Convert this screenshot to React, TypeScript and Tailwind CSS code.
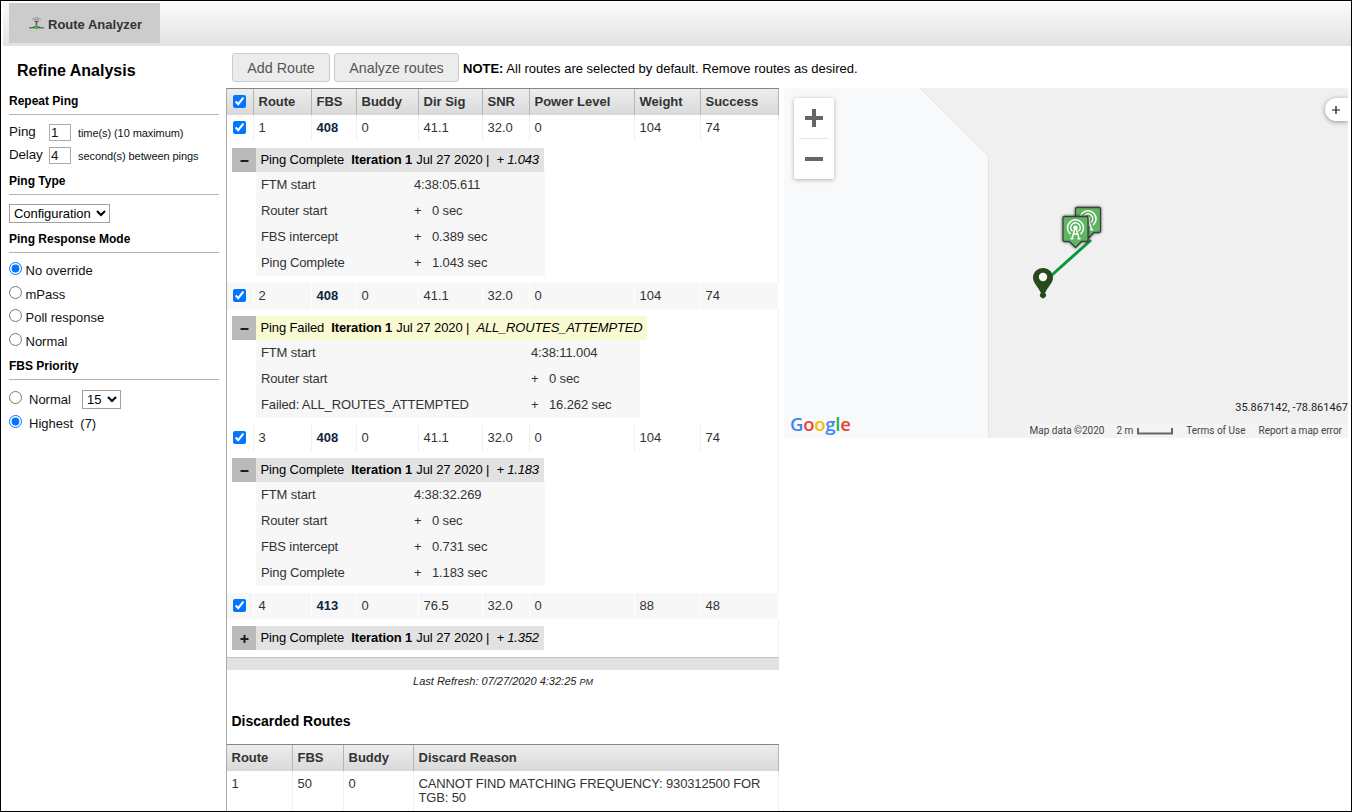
import type { ReactNode } from "react";

const COLS = "grid grid-cols-[27px_58px_45px_62px_64px_47px_105px_66px_78px]";
const DISCARD_COLS = "grid grid-cols-[66px_51px_70px_365px]";

type Step = { label: string; plus?: boolean; value: string };
type Ping = { failed?: boolean; open: boolean; result: string; steps: Step[] };
type RouteRow = { id: number; cells: string[]; ping: Ping };

const ROUTES: RouteRow[] = [
  {
    id: 1,
    cells: ["408", "0", "41.1", "32.0", "0", "104", "74"],
    ping: {
      open: true,
      result: "+ 1.043",
      steps: [
        { label: "FTM start", value: "4:38:05.611" },
        { label: "Router start", plus: true, value: "0 sec" },
        { label: "FBS intercept", plus: true, value: "0.389 sec" },
        { label: "Ping Complete", plus: true, value: "1.043 sec" },
      ],
    },
  },
  {
    id: 2,
    cells: ["408", "0", "41.1", "32.0", "0", "104", "74"],
    ping: {
      failed: true,
      open: true,
      result: "ALL_ROUTES_ATTEMPTED",
      steps: [
        { label: "FTM start", value: "4:38:11.004" },
        { label: "Router start", plus: true, value: "0 sec" },
        { label: "Failed: ALL_ROUTES_ATTEMPTED", plus: true, value: "16.262 sec" },
      ],
    },
  },
  {
    id: 3,
    cells: ["408", "0", "41.1", "32.0", "0", "104", "74"],
    ping: {
      open: true,
      result: "+ 1.183",
      steps: [
        { label: "FTM start", value: "4:38:32.269" },
        { label: "Router start", plus: true, value: "0 sec" },
        { label: "FBS intercept", plus: true, value: "0.731 sec" },
        { label: "Ping Complete", plus: true, value: "1.183 sec" },
      ],
    },
  },
  {
    id: 4,
    cells: ["413", "0", "76.5", "32.0", "0", "88", "48"],
    ping: { open: false, result: "+ 1.352", steps: [] },
  },
];

const HEADINGS = ["Route", "FBS", "Buddy", "Dir Sig", "SNR", "Power Level", "Weight", "Success"];

function TowerIcon() {
  return (
    <svg width="15" height="14" viewBox="0 0 15 14" fill="none">
      <path d="M3 3.600Q7.500-.6 12 3.600" stroke="#999" strokeWidth="1" />
      <path d="M5 4.300Q7.500 2 10 4.300" stroke="#777" strokeWidth="1" />
      <path d="M5.500 5.500h4" stroke="#555" strokeWidth="1" />
      <path d="M7.500 5v6" stroke="#555" strokeWidth="1.500" />
      <path d="M0 12Q4 11.600 5 10.800h5q1 .8 5 1.200z" fill="#3c4a3c" stroke="#4a554a" strokeWidth=".6" />
      <path d="M5.500 11.300L7.500 9.300l2 2-2 1.700z" fill="#22c02c" stroke="#22c02c" strokeWidth=".6" />
    </svg>
  );
}

function SectionTitle({ children, className }: { children: ReactNode; className: string }) {
  return (
    <h3 className={`border-b border-[#b3b3b3] text-[12px] leading-[14px] font-bold text-black ${className}`}>
      {children}
    </h3>
  );
}

function Radio({ name, label, checked, className = "", children }: {
  name: string; label: string; checked?: boolean; className?: string; children?: ReactNode;
}) {
  return (
    <label className={`flex items-start text-[13px] leading-[18px] text-[#111] ${className}`}>
      <input type="radio" name={name} defaultChecked={checked} className="size-[13px] shrink-0" />
      <span className={name === "mode" ? "ml-[3.500px]" : "ml-[7px] whitespace-pre"}>{label}</span>
      {children}
    </label>
  );
}

function Sidebar() {
  return (
    <aside className="flex w-[218px] shrink-0 flex-col pl-2">
      <h2 className="mt-4 ml-2 text-[16px] leading-[18px] font-bold text-black">Refine Analysis</h2>
      <SectionTitle className="mt-[14px] h-[21px]">Repeat Ping</SectionTitle>
      <div className="mt-[9px] flex h-[18px] text-[13px] leading-[16px] text-[#111]">
        <span className="w-10 pt-px text-[13.4px] leading-[14px]">Ping</span>
        <input defaultValue="1" className="h-[17px] w-[22px] border border-[#a9a9a9] px-px pb-px text-[13.4px] leading-[14px]" />
        <span className="ml-[7px] pt-px text-[11px] tracking-[-0.08px]">time(s) (10 maximum)</span>
      </div>
      <div className="mt-[5px] flex h-[18px] text-[13px] leading-[16px] text-[#111]">
        <span className="w-10 pt-px text-[13.4px] leading-[14px] tracking-[-0.15px]">Delay</span>
        <input defaultValue="4" className="h-[17px] w-[22px] border border-[#a9a9a9] px-px pb-px text-[13.4px] leading-[14px]" />
        <span className="ml-[7px] pt-px text-[11px] tracking-[-0.08px]">second(s) between pings</span>
      </div>
      <SectionTitle className="mt-[9px] h-[21px]">Ping Type</SectionTitle>
      <select className="mt-[9px] h-[19px] w-[101px] rounded-none border border-[#a0a0a0] bg-white text-[13px] tracking-[-0.05px] text-black">
        <option>Configuration</option>
      </select>
      <SectionTitle className="mt-[9px] h-[21px]">Ping Response Mode</SectionTitle>
      <div className="mt-[9px] flex flex-col">
        <Radio name="mode" label="No override" checked className="h-6" />
        <Radio name="mode" label="mPass" className="h-[23px]" />
        <Radio name="mode" label="Poll response" className="h-6" />
        <Radio name="mode" label="Normal" className="h-[18px]" />
      </div>
      <SectionTitle className="mt-[8px] h-[21px]">FBS Priority</SectionTitle>
      <div className="mt-[11px] flex flex-col">
        <Radio name="priority" label="Normal" className="h-6">
          <select className="-mt-px ml-[11px] h-[19px] w-[39px] rounded-none border border-[#a0a0a0] bg-white text-[13px] text-black">
            <option>15</option>
          </select>
        </Radio>
        <Radio name="priority" label="Highest  (7)" checked className="h-6" />
      </div>
    </aside>
  );
}

function PingBlock({ ping }: { ping: Ping }) {
  return (
    <div className="flex border-r border-[#f3f3f3] py-[7px] pl-[5px] text-[13px]">
      <div className="flex h-6 w-6 shrink-0 items-center justify-center bg-[#bababa]">
        <svg width="9" height="9" viewBox="0 0 9 9" className="mt-px">
          <path d={ping.open ? "M0.5 5h8" : "M0.5 5h8M4.5 1v8"} stroke="#1c1c1c" strokeWidth="2" />
        </svg>
      </div>
      <div>
        <div className={`flex h-6 pl-[4.5px] leading-6 whitespace-pre text-black ${ping.failed ? "w-[391px] bg-[#fafad2]" : "w-72 bg-[#e2e2e2]"}`}>
          <span className="tracking-[-0.12px]">{ping.failed ? "Ping Failed" : "Ping Complete"}</span>
          <span className="ml-[7px] font-bold tracking-[-0.1px]">Iteration 1</span>
          <span className="ml-1 tracking-[-0.08px]">Jul 27 2020 |</span>
          <span className={`italic ${ping.failed ? "ml-[7px] tracking-[-0.18px]" : "ml-[7px] tracking-[-0.2px]"}`}>{ping.result}</span>
        </div>
        {ping.steps.map((s) => (
          <div key={s.label} className={`flex h-[26px] bg-[#f7f7f7] pl-[5px] leading-[26px] text-[#333] ${ping.failed ? "w-[384px]" : "w-[289px]"}`}>
            <span className={`shrink-0 ${ping.failed ? "w-[270px]" : "w-[153px]"} tracking-[-0.13px]`}>{s.label}</span>
            {s.plus && <span className="w-[18px] shrink-0">+</span>}
            <span className="tracking-[-0.12px]">{s.value}</span>
          </div>
        ))}
      </div>
    </div>
  );
}

function Cell({ children, bold }: { children: ReactNode; bold?: boolean }) {
  return (
    <div className={`border-r border-[#efefef] pl-[4.500px] leading-[25px] ${bold ? "font-bold text-[#0f2540]" : "text-[#333]"}`}>
      {children}
    </div>
  );
}

const HEAD = "h-[27px] border-t border-[#858585] bg-linear-to-b from-[#ededed] to-[#d9d9d9] text-[13px] font-bold text-[#333]";
const HEAD_CELL = "border-r border-[#b5b5b5] pl-[4.500px] leading-[25px]";
const BUTTON = "h-[29px] shrink-0 rounded-[3px] border border-[#ccc] bg-[#ececec] text-[14.3px] leading-[26px] whitespace-nowrap text-[#555]";

function Routes() {
  return (
    <main className="w-[553px] shrink-0">
      <div className="flex h-[42px] pt-[7px] pl-[6px]">
        <button className={`w-[98px] ${BUTTON}`}>Add Route</button>
        <button className={`ml-1 w-[125px] ${BUTTON}`}>Analyze routes</button>
        <p className="ml-1 text-[13px] leading-[31px] whitespace-nowrap text-black">
          <b>NOTE:</b> All routes are selected by default. Remove routes as desired.
        </p>
      </div>
      <div className="h-[723px] border-l border-[#aaa]">
        <div className="text-[13px]">
          <div className={`${COLS} ${HEAD}`}>
            <div className={HEAD_CELL}>
              <input type="checkbox" defaultChecked className="ml-[1.500px] block size-[13px] translate-y-[6px]" />
            </div>
            {HEADINGS.map((h) => (
              <div key={h} className={HEAD_CELL}>{h}</div>
            ))}
          </div>
          {ROUTES.map((r) => (
            <div key={r.id}>
              <div className={`${COLS} h-[26px] ${r.id % 2 === 0 ? "bg-[#f7f7f7] [&>div]:border-white" : ""}`}>
                <Cell>
                  <input type="checkbox" defaultChecked className="ml-[1.500px] block size-[13px] translate-y-[6px]" />
                </Cell>
                <Cell>{r.id}</Cell>
                {r.cells.map((c, i) => (
                  <Cell key={i} bold={i === 0}>{c}</Cell>
                ))}
              </div>
              <PingBlock ping={r.ping} />
            </div>
          ))}
          <div className="h-[13px] border-t border-[#c3c3c3] bg-[#e2e2e2]" />
        </div>
        <p className="mt-1 text-center text-[11px] leading-[14px] text-[#222] italic">
          Last Refresh: 07/27/2020 4:32:25 <span className="text-[9px]">PM</span>
        </p>
        <h3 className="mt-6 pl-[4.500px] text-[14px] leading-4 font-bold text-black">Discarded Routes</h3>
        <div className={`mt-[15px] ${DISCARD_COLS} ${HEAD}`}>
          {["Route", "FBS", "Buddy", "Discard Reason"].map((h) => (
            <div key={h} className={HEAD_CELL}>{h}</div>
          ))}
        </div>
        <div className={`${DISCARD_COLS} h-10 text-[13px] text-[#333]`}>
          {["1", "50", "0"].map((c, i) => (
            <div key={i} className="border-r border-[#efefef] pt-[6px] pl-[4.500px] leading-[14px]">{c}</div>
          ))}
          <div className="border-r border-[#efefef] pt-[6px] pl-[4.500px] leading-[14px] tracking-[-0.15px]">
            CANNOT FIND MATCHING FREQUENCY: 930312500 FOR
            <br />
            TGB: 50
          </div>
        </div>
      </div>
    </main>
  );
}

function TowerGlyph({ x, y }: { x: number; y: number }) {
  return (
    <g transform={`translate(${x} ${y})`}>
      <path
        d="M2 .5h22q1.500 0 1.500 1.500v22q0 1.500-1.500 1.500h-5l-6 6-6-6H2Q.5 25.500.5 24V2Q.5.5 2 .5z"
        fill="#5fb662" stroke="#3e3e3e" strokeWidth="1.300" filter="url(#glow)"
      />
      <g fill="none" stroke="#fff" strokeWidth="1.500" strokeLinecap="round">
        <path d="M7.500 17.600a8 8 0 1 1 11 0" />
        <path d="M9.600 14.800a4.700 4.700 0 1 1 6.800 0" />
        <path d="M12.300 13L9.500 22.500M13.700 13l2.800 9.500M11.300 18h3.400M8.500 22.700h2M15.500 22.700h2" />
      </g>
      <circle cx="13" cy="11.800" r="2.200" fill="#fff" />
    </g>
  );
}

function MapPanel() {
  return (
    <section className="relative mt-[42px] ml-[5px] h-[350px] w-[564px] shrink-0 overflow-hidden bg-[#f0f0f0] font-[Roboto,sans-serif]">
      <svg width="564" height="350" viewBox="0 0 564 350" className="absolute inset-0">
        <defs>
          <filter id="glow" x="-30%" y="-30%" width="160%" height="160%">
            <feDropShadow dx="0" dy="0" stdDeviation="1.800" floodColor="#000" floodOpacity="0.650" />
          </filter>
        </defs>
        <path d="M0 0h136l68.500 68v282H0z" fill="#f8f9fb" />
        <path d="M136 0l68.500 68v282" fill="none" stroke="#e4e4e4" />
        <path d="M259 195l48-43" stroke="#0a9a3c" strokeWidth="3" />
        <TowerGlyph x={291} y={119} />
        <TowerGlyph x={278.5} y={128} />
        <path d="M259 180c-5.600 0-10 4.300-10 9.700 0 5 5.300 9.300 8 15.300a3 3 0 1 0 4 0c2.700-6 8-10.300 8-15.300 0-5.400-4.400-9.700-10-9.700z" fill="#264a1a" />
        <circle cx="259" cy="189" r="4.200" fill="#fff" />
      </svg>
      <div className="absolute top-[10px] left-[10px] flex h-[81px] w-10 flex-col items-center rounded-[2px] bg-white shadow-[0_1px_4px_rgba(0,0,0,0.3)]">
        <svg width="40" height="81" viewBox="0 0 40 81">
          <path d="M11 20h18M20 11v18M11 61h18" stroke="#666" strokeWidth="4" />
          <path d="M5 40.500h30" stroke="#e6e6e6" />
        </svg>
      </div>
      <div className="absolute top-[10px] right-0 flex h-[23px] w-[23px] items-center justify-center rounded-l-full bg-white shadow-[0_1px_5px_rgba(0,0,0,0.4)]">
        <svg width="8" height="8" viewBox="0 0 8 8" className="mr-px">
          <path d="M0 4h8M4 0v8" stroke="#111" strokeWidth="1.200" />
        </svg>
      </div>
      <div className="absolute bottom-[3px] left-[6px] font-['Open_Sans',sans-serif] text-[18.500px] leading-[22px] font-semibold tracking-[-0.25px]">
        <span className="text-[#4285f4]">G</span>
        <span className="text-[#ea4335]">o</span>
        <span className="text-[#fbbc05]">o</span>
        <span className="text-[#4285f4]">g</span>
        <span className="text-[#34a853]">l</span>
        <span className="text-[#ea4335]">e</span>
      </div>
      <div className="absolute right-0 bottom-[23px] text-[11px] leading-[14px] text-[#222]">35.867142, -78.861467</div>
      <div className="absolute right-0 bottom-0 flex h-[14px] items-center bg-[#f4f4f4] pr-[6px] pl-[5px] text-[10px] leading-[14px] whitespace-nowrap text-[#444]">
        <span>Map data ©2020</span>
        <span className="ml-3">2 m</span>
        <svg width="36" height="7" viewBox="0 0 36 7" className="mt-px ml-1">
          <path d="M1 0v5.500h34V0" fill="none" stroke="#666" strokeWidth="2" />
        </svg>
        <span className="ml-[13px]">Terms of Use</span>
        <span className="ml-[13px]">Report a map error</span>
      </div>
    </section>
  );
}

export default function App() {
  return (
    <div className="flex h-[812px] w-[1352px] flex-col overflow-hidden border border-black bg-white font-['Liberation_Sans',Arial,sans-serif]">
      <header className="ml-[2px] flex h-[45px] shrink-0 bg-linear-to-b from-[#fcfcfc] to-[#e2e2e2] pt-[2px] pl-[6px]">
        <div className="flex h-10 w-[151px] items-center bg-[#ccc] pl-5 text-[13px] font-bold text-[#333]">
          <TowerIcon />
          <span className="mt-1 ml-1">Route Analyzer</span>
        </div>
      </header>
      <div className="flex">
        <Sidebar />
        <div className="w-[7px] shrink-0" />
        <Routes />
        <MapPanel />
      </div>
    </div>
  );
}
